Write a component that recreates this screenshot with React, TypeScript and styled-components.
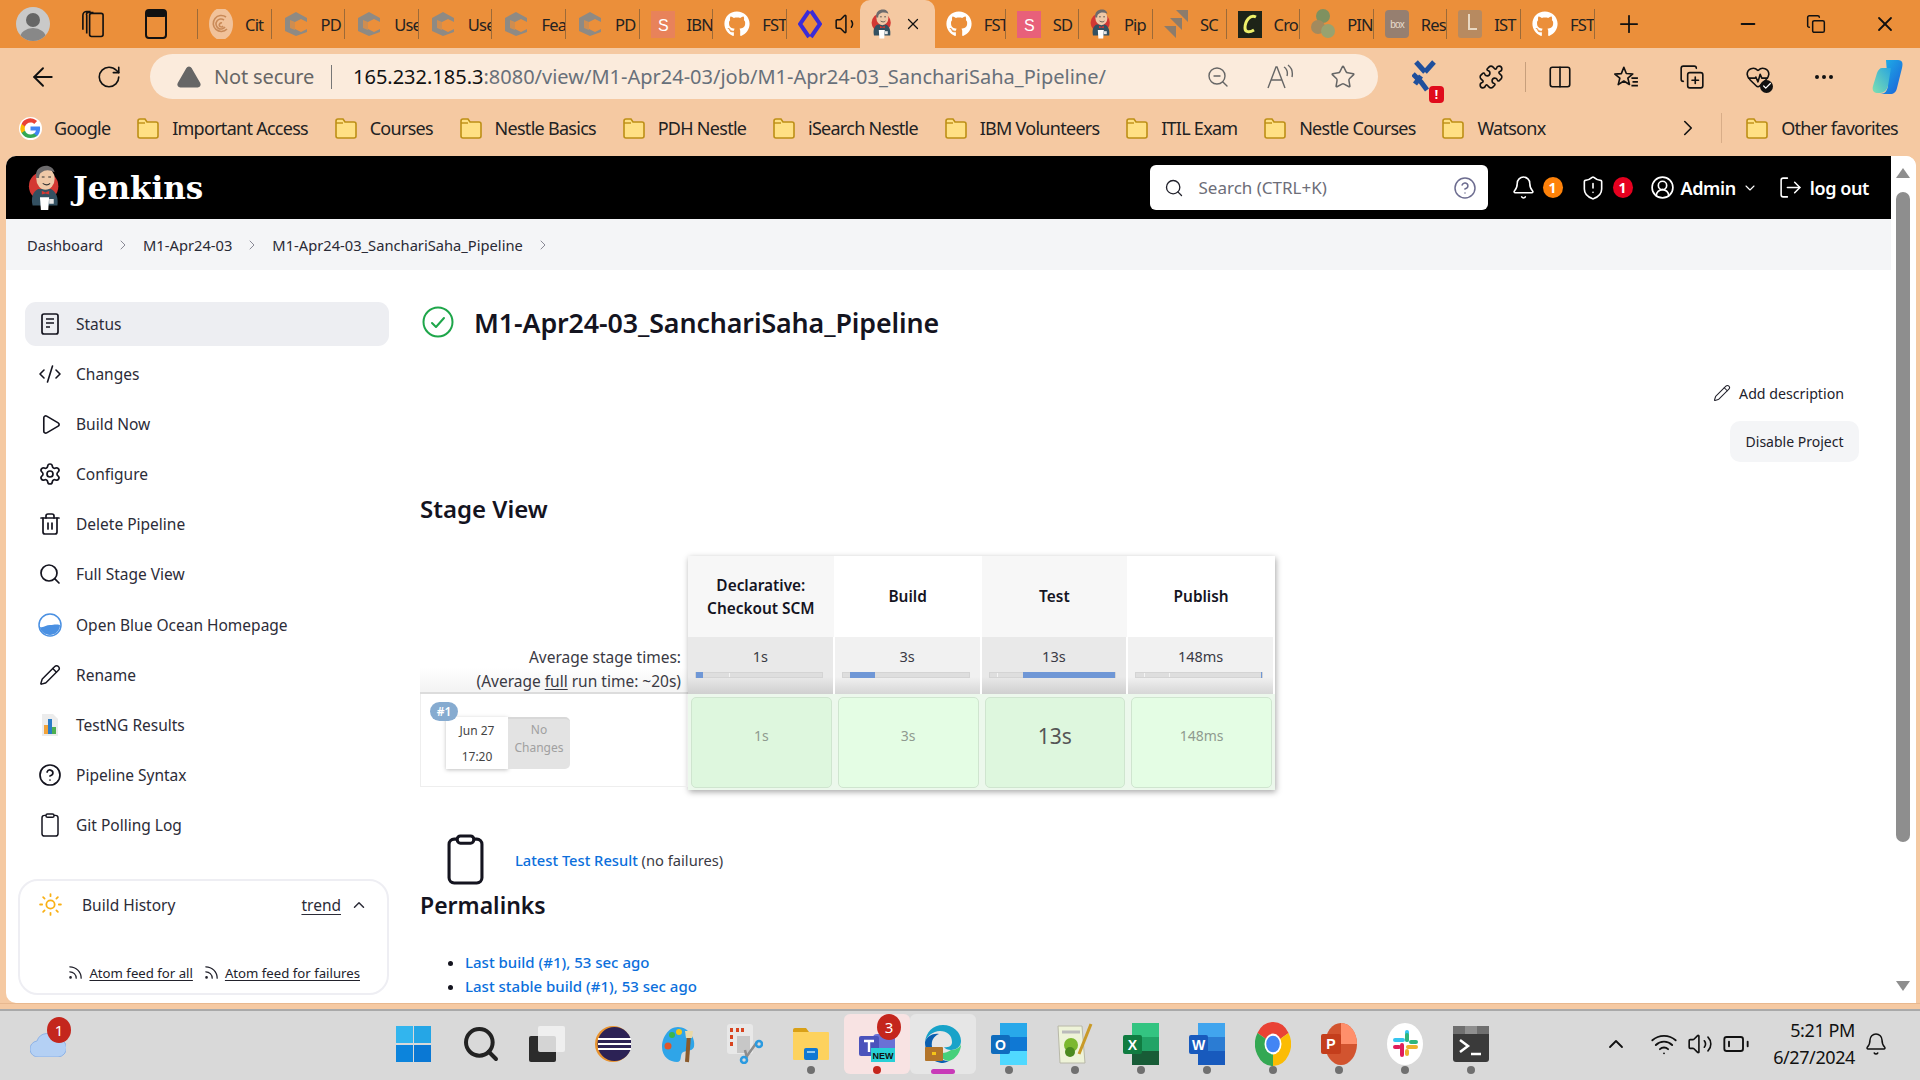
import React from "react";
import styled, { createGlobalStyle } from "styled-components";
import {
  ArrowLeft, RotateCw, TriangleAlert, ZoomOut, Star, Puzzle, Columns2, CopyPlus, HeartPulse, Ellipsis,
  Plus, Minus, X, Copy, Volume1, Volume2, Bell, ShieldAlert, CircleUserRound, ChevronDown, ChevronUp, ChevronRight,
  LogOut, Search, CircleHelp, Pencil, CodeXml, Play, Settings, Trash2, Sun, Rss, Wifi, BatteryLow, Check,
} from "lucide-react";
import { FaGithub } from "react-icons/fa";

const GlobalStyle = createGlobalStyle`
  html, body { margin: 0; padding: 0; width: 1920px; height: 1080px; overflow: hidden; }
  body { font-family: "Noto Sans", "Liberation Sans", sans-serif; color: #14141f; }
  * { box-sizing: border-box; }
`;

const Screen = styled.div`
  width: 1920px;
  height: 1080px;
  display: flex;
  flex-direction: column;
  background: #f5c9a2;
`;

/* browser chrome */
const TabBar = styled.div`
  height: 48px;
  background: #eb8f3a;
  display: flex;
  align-items: center;
  padding-left: 16px;
  flex: none;
`;
const Avatar = styled.div`
  width: 34px;
  height: 34px;
  border-radius: 50%;
  background: #c9c9c9;
  margin-right: 30px;
  overflow: hidden;
  flex: none;
`;
const TabTool = styled.div<{ $w: number; $mr: number }>`
  width: ${(p) => p.$w}px;
  margin-right: ${(p) => p.$mr}px;
  display: flex;
  justify-content: center;
  flex: none;
`;
const TabStrip = styled.div`
  display: flex;
  align-items: center;
  border-left: 1px solid #9c6a38;
  height: 30px;
`;
const Tab = styled.div<{ $w?: number; $plain?: boolean }>`
  width: ${(p) => p.$w || 73.6}px;
  height: 30px;
  flex: none;
  display: flex;
  align-items: center;
  gap: 12px;
  padding-left: 11px;
  overflow: hidden;
  border-right: ${(p) => (p.$plain ? "none" : "1px solid #9c6a38")};
  font-size: 16.5px;
  letter-spacing: -0.8px;
  color: #222;
  white-space: nowrap;
  svg { flex: none; }
`;
const ActiveTab = styled.div`
  width: 75px;
  height: 48px;
  flex: none;
  background: #f5c9a2;
  border-radius: 10px 10px 0 0;
  display: flex;
  align-items: center;
  padding-left: 11px;
  gap: 12px;
  svg { flex: none; }
`;
const NewTab = styled.div`
  margin-left: 20px;
  display: flex;
`;
const WindowControls = styled.div`
  margin-left: auto;
  display: flex;
  align-items: center;
  gap: 47px;
  padding-right: 23px;
`;

const Toolbar = styled.div`
  height: 62px;
  display: flex;
  align-items: center;
  padding: 0 0 5px 28px;
  flex: none;
`;
const NavButton = styled.div<{ $mr: number }>`
  display: flex;
  margin-right: ${(p) => p.$mr}px;
`;
const AddressPill = styled.div`
  width: 1228px;
  height: 45px;
  background: #fbebdc;
  border-radius: 23px;
  display: flex;
  align-items: center;
  padding: 0 22px 0 26px;
  margin-right: 14px;
  flex: none;
`;
const NotSecure = styled.span`
  font-size: 20px;
  letter-spacing: -0.15px;
  color: #666;
  margin-left: 12px;
  width: 117px;
  white-space: nowrap;
`;
const PillDivider = styled.div`
  width: 1px;
  height: 24px;
  background: #777;
  margin-right: 21px;
`;
const Url = styled.span`
  font-size: 20px;
  color: #68707a;
  white-space: nowrap;
  b { font-weight: 400; color: #111; }
`;
const PillIcons = styled.div`
  margin-left: auto;
  display: flex;
  align-items: center;
  gap: 36px;
`;
const ToolSlot = styled.div`
  width: 66px;
  display: flex;
  justify-content: center;
  position: relative;
  flex: none;
`;
const ToolSep = styled.div`
  width: 1px;
  height: 30px;
  background: #c79f7c;
  margin: 0 1px;
  flex: none;
`;
const ExtBadge = styled.span`
  position: absolute;
  right: 14px;
  bottom: -9px;
  width: 15px;
  height: 17px;
  border-radius: 4px;
  background: #e00b1c;
  color: #fff;
  font-size: 12px;
  font-weight: 700;
  text-align: center;
  line-height: 17px;
`;
const HeartBadge = styled.span`
  position: absolute;
  right: 18px;
  bottom: -3px;
  width: 13px;
  height: 13px;
  border-radius: 50%;
  background: #111;
  color: #fff;
  display: flex;
  align-items: center;
  justify-content: center;
`;

const BookmarkBar = styled.div`
  height: 46px;
  display: flex;
  align-items: center;
  padding: 0 0 10px 19px;
  gap: 25.7px;
  flex: none;
`;
const Bookmark = styled.div`
  display: flex;
  align-items: center;
  gap: 12px;
  font-size: 18px;
  letter-spacing: -0.72px;
  color: #222;
  white-space: nowrap;
`;
const BookmarkEnd = styled.div`
  margin-left: auto;
  display: flex;
  align-items: center;
  padding-right: 22px;
`;
const BookmarkDivider = styled.div`
  width: 1px;
  height: 30px;
  background: #d8ad88;
  margin: 0 23px 0 20px;
`;

/* jenkins page */
const Page = styled.div`
  height: 847px;
  margin: 0 4px 0 6px;
  background: #fff;
  border-radius: 10px 10px 0 10px;
  display: flex;
  overflow: hidden;
  flex: none;
`;
const PageBody = styled.div`
  width: 1885px;
  display: flex;
  flex-direction: column;
  flex: none;
`;
const Header = styled.header`
  height: 63px;
  background: #000;
  display: flex;
  align-items: center;
  color: #fff;
  padding: 0 22px;
  flex: none;
`;
const Brand = styled.div`
  font-family: "DejaVu Serif", "Liberation Serif", serif;
  font-weight: 700;
  font-size: 31px;
  margin-left: 12px;
`;
const SearchBox = styled.div`
  margin-left: auto;
  width: 338px;
  height: 45px;
  background: #fff;
  border-radius: 6px;
  display: flex;
  align-items: center;
  padding: 0 11px 0 14px;
  color: #6d6d78;
  font-size: 17px;
  gap: 15px;
  svg:last-child { margin-left: auto; }
`;
const HeaderGroup = styled.div<{ $ml: number; $gap?: number }>`
  display: flex;
  align-items: center;
  margin-left: ${(p) => p.$ml}px;
  gap: ${(p) => p.$gap ?? 7}px;
`;
const Count = styled.span<{ $c: string }>`
  width: 20px;
  height: 21px;
  border-radius: 50%;
  background: ${(p) => p.$c};
  color: #fff;
  font-size: 14px;
  font-weight: 700;
  display: flex;
  align-items: center;
  justify-content: center;
`;
const HeaderLabel = styled.span`
  font-size: 18px;
  font-weight: 600;
  letter-spacing: -0.4px;
  color: #fff;
`;

const Breadcrumbs = styled.nav`
  height: 51px;
  background: #f4f5f7;
  display: flex;
  align-items: center;
  padding-left: 21px;
  gap: 12px;
  font-size: 14.7px;
  color: #2a2a35;
  flex: none;
  svg { color: #8a8a96; }
`;
const Content = styled.div`
  flex: 1;
  min-height: 0;
  display: grid;
  grid-template-columns: 414px 1fr;
`;
const Sidebar = styled.aside`
  padding: 32px 0 0 12px;
`;
const SideNav = styled.nav`
  margin-left: 7px;
  width: 364px;
  display: flex;
  flex-direction: column;
  gap: 6.1px;
`;
const SideItem = styled.a<{ $active?: boolean }>`
  height: 44px;
  display: flex;
  align-items: center;
  gap: 14px;
  padding-left: 13px;
  border-radius: 11px;
  background: ${(p) => (p.$active ? "#edeef2" : "transparent")};
  font-size: 15.5px;
  color: #2c2c38;
`;
const SideIcon = styled.span`
  width: 24px;
  height: 24px;
  display: flex;
  align-items: center;
  justify-content: center;
  color: #14141f;
  flex: none;
`;
const HistoryCard = styled.section`
  margin-top: 32px;
  width: 371px;
  height: 116px;
  border: 2px solid #eeeef3;
  border-radius: 20px;
  padding-left: 18px;
  display: flex;
  flex-direction: column;
`;
const HistoryHead = styled.div`
  display: flex;
  align-items: center;
  height: 48px;
  font-size: 15.5px;
  color: #2c2c38;
`;
const HistoryTitle = styled.span`
  margin-left: 19px;
`;
const TrendLink = styled.a`
  margin-left: auto;
  text-decoration: underline;
  text-underline-offset: 3px;
`;
const HistoryToggle = styled.span`
  display: flex;
  margin: 0 19px 0 9px;
`;
const FeedRow = styled.div`
  margin-top: 35px;
  display: flex;
  justify-content: flex-end;
  align-items: center;
  gap: 10px;
  padding-right: 27px;
  font-size: 13.2px;
  color: #22222c;
`;
const FeedLink = styled.a`
  display: flex;
  align-items: flex-start;
  gap: 5px;
  line-height: 18px;
  span { text-decoration: underline; text-underline-offset: 2px; }
`;

const Main = styled.main`
  padding: 32px 32px 0 0;
  min-width: 0;
`;
const TitleRow = styled.div`
  display: flex;
  align-items: center;
  height: 40px;
  gap: 20px;
  margin-left: 2px;
`;
const PipelineTitle = styled.h1`
  margin: 0;
  font-size: 26.8px;
  font-weight: 600;
  letter-spacing: -0.1px;
  white-space: nowrap;
`;
const Actions = styled.div`
  margin-top: 34px;
  display: flex;
  flex-direction: column;
  align-items: flex-end;
  gap: 11px;
`;
const AddDescription = styled.a`
  height: 34px;
  display: flex;
  align-items: center;
  gap: 8px;
  padding-right: 15px;
  font-size: 14.2px;
  color: #22222c;
`;
const DisableButton = styled.button`
  width: 129px;
  height: 41px;
  border: none;
  border-radius: 10px;
  background: #f4f5f7;
  font-family: inherit;
  font-size: 14px;
  color: #22222c;
`;
const SectionTitle = styled.h2<{ $mt: number; $size: number }>`
  margin: ${(p) => p.$mt}px 0 0;
  font-size: ${(p) => p.$size}px;
  line-height: 32px;
  font-weight: 600;
`;
const StageView = styled.div`
  margin-top: 31px;
  display: flex;
  align-items: flex-start;
`;
const StageLabels = styled.div`
  width: 268px;
  flex: none;
  padding-top: 81px;
`;
const AverageNote = styled.div`
  height: 57px;
  padding: 8px 7px 0 0;
  text-align: right;
  font-size: 15.5px;
  line-height: 24px;
  color: #3a3a44;
  white-space: nowrap;
  background: linear-gradient(#fff 55%, #f4f4f4 95%);
  border-bottom: 2px solid #dcdcdc;
  u { text-underline-offset: 2px; }
`;
const BuildRow = styled.div`
  height: 93px;
  border: 1px solid #eeeeee;
  border-top: none;
  position: relative;
  padding: 23px 0 0 25px;
  display: flex;
  align-items: flex-start;
`;
const BuildBadge = styled.span`
  position: absolute;
  left: 9px;
  top: 8px;
  width: 28px;
  height: 19px;
  border-radius: 10px;
  background: #86abd0;
  color: #fff;
  font-size: 12px;
  font-weight: 600;
  line-height: 19px;
  text-align: center;
`;
const BuildDate = styled.div`
  width: 62px;
  height: 52px;
  background: #fff;
  box-shadow: 0 1px 4px rgba(0, 0, 0, 0.25);
  font-size: 12px;
  line-height: 26px;
  padding-top: 1px;
  color: #444;
  text-align: center;
`;
const NoChanges = styled.div`
  width: 62px;
  height: 52px;
  background: #e3e3e3;
  border-radius: 0 5px 5px 0;
  border-top: 2px solid #d8d8d8;
  font-size: 12px;
  line-height: 18px;
  color: #a0a0a0;
  text-align: center;
  padding-top: 2px;
`;
const StageTable = styled.div`
  width: 587px;
  display: grid;
  grid-template-columns: repeat(4, 1fr);
  grid-template-rows: 81px 57px 96px;
  box-shadow: 1px 2px 6px rgba(0, 0, 0, 0.35);
  flex: none;
  background: #e9f7e9;
`;
const StageHead = styled.div<{ $odd: boolean }>`
  background: ${(p) => (p.$odd ? "#f7f7f7" : "#fff")};
  border-right: 1px solid #fff;
  display: flex;
  align-items: center;
  justify-content: center;
  text-align: center;
  font-size: 15.4px;
  font-weight: 600;
  line-height: 23px;
  padding: 0 10px;
`;
const StageAvg = styled.div<{ $odd: boolean }>`
  background: linear-gradient(
    ${(p) => (p.$odd ? "#e9e9e9 70%, #cfcfcf" : "#f1f1f1 70%, #d6d6d6")}
  );
  border-right: 2px solid #fff;
  text-align: center;
  font-size: 14.5px;
  line-height: 20px;
  color: #3a3a44;
  padding: 9px 6px 0;
`;
const BarTrack = styled.div`
  position: relative;
  height: 6px;
  margin: 6px 4px 0 1px;
  background: #dedede;
  border: 1px solid #d4d4d4;
`;
const BarFill = styled.span`
  position: absolute;
  top: -1px;
  bottom: -1px;
  background: #6f97d6;
`;
const BarTick = styled.span`
  position: absolute;
  top: 0;
  bottom: 0;
  width: 1px;
  background: #f4f4f4;
`;
const StageCell = styled.div`
  padding: 3px 3px 2px;
  display: flex;
  background: #ecf8ec;
`;
const StageCard = styled.div<{ $odd: boolean; $big?: boolean }>`
  flex: 1;
  background: ${(p) => (p.$odd ? "#def7de" : "#e4fde4")};
  border: 1px solid #cfe5cf;
  border-radius: 5px;
  padding-bottom: 14px;
  display: flex;
  align-items: center;
  justify-content: center;
  font-size: ${(p) => (p.$big ? 21 : 14)}px;
  color: ${(p) => (p.$big ? "#555" : "#8f9a8f")};
`;
const TestResult = styled.div`
  margin: 44px 0 0 27px;
  display: flex;
  align-items: center;
  gap: 31px;
  height: 51px;
  font-size: 14.7px;
  color: #3a3a44;
`;
const BlueLink = styled.a`
  color: #0b6fdc;
  font-weight: 500;
`;
const Permalinks = styled.ul`
  margin: 29px 0 0;
  padding: 0 0 0 45px;
  font-size: 15px;
  line-height: 24px;
`;

const Scrollbar = styled.div`
  width: 25px;
  flex: none;
  position: relative;
  background: #fff;
`;
const ScrollArrow = styled.span<{ $up?: boolean }>`
  position: absolute;
  left: 5px;
  ${(p) => (p.$up ? "top: 12px;" : "bottom: 12px;")}
  width: 0;
  height: 0;
  border-left: 7px solid transparent;
  border-right: 7px solid transparent;
  ${(p) => (p.$up ? "border-bottom: 10px solid #8e8e8e;" : "border-top: 10px solid #8e8e8e;")}
`;
const ScrollThumb = styled.div`
  position: absolute;
  left: 5px;
  top: 36px;
  width: 14px;
  height: 650px;
  background: #8e8e8e;
  border-radius: 7px;
`;

/* taskbar */
const Gutter = styled.div`
  height: 6px;
  flex: none;
  border-top: 1px solid #e8b88f;
`;
const Taskbar = styled.div`
  height: 71px;
  flex: none;
  background: #d9d9d9;
  border-top: 2px solid #a9a9a9;
  padding-bottom: 3px;
  display: flex;
  align-items: center;
`;
const WeatherSlot = styled.div`
  width: 382px;
  padding-left: 30px;
  flex: none;
  display: flex;
  position: relative;
`;
const RedCount = styled.span<{ $l: number; $t: number }>`
  position: absolute;
  left: ${(p) => p.$l}px;
  top: ${(p) => p.$t}px;
  width: 24px;
  height: 26px;
  border-radius: 50%;
  background: #c4261d;
  color: #fff;
  font-size: 15px;
  line-height: 26px;
  text-align: center;
`;
const TaskItem = styled.div<{ $bg?: string }>`
  width: 66px;
  height: 60px;
  flex: none;
  display: flex;
  align-items: center;
  justify-content: center;
  position: relative;
  border-radius: 6px;
  background: ${(p) => p.$bg || "transparent"};
`;
const StartNudge = styled.span`
  display: flex;
  margin-right: 4px;
`;
const TaskDot = styled.span<{ $c?: string; $wide?: boolean }>`
  position: absolute;
  bottom: 0;
  left: 50%;
  transform: translateX(-50%);
  width: ${(p) => (p.$wide ? 24 : 8)}px;
  height: ${(p) => (p.$wide ? 5 : 8)}px;
  border-radius: 4px;
  background: ${(p) => p.$c || "#707070"};
`;
const Tray = styled.div`
  margin-left: auto;
  display: flex;
  align-items: center;
  padding-right: 32px;
`;
const TrayIcons = styled.div`
  display: flex;
  align-items: center;
  gap: 9px;
  margin-right: 23px;
  svg:first-child { margin-right: 13px; }
`;
const Clock = styled.div`
  text-align: right;
  font-size: 18px;
  letter-spacing: -0.4px;
  line-height: 27px;
  color: #111;
  margin-right: 9px;
`;

/* drawings */
const JenkinsLogo = ({ h }: { h: number }) => (
  <svg width={h * 0.72} height={h} viewBox="0 0 36 50">
    <circle cx="17" cy="23" r="16" fill="#d33833" />
    <path d="M5 44c-2-8 0-15 6-18l14 0c6 3 8 10 7 18z" fill="#335061" />
    <ellipse cx="19" cy="15" rx="10" ry="12" fill="#efc9a8" />
    <path d="M9 14C7 4 15 0 22 1c4 1 6 3 7 7-5-3-11-3-14 0-2 1-3 3-3 6z" fill="#6d6b6d" />
    <path d="M15 13h3M22 13h3M16 20c3 2 6 2 8 0" stroke="#333" strokeWidth="1.2" fill="none" />
    <path d="M15 28l4 2 4-2v4l-4-1-4 1z" fill="#d33833" />
    <path d="M13 35h10l-1 14h-8z" fill="#fff" />
    <path d="M23 37h5v5h-5z" fill="#e5e5e5" />
  </svg>
);

const WorkspaceIcon = () => (
  <svg width="26" height="30" viewBox="0 0 26 30" fill="none" stroke="#111" strokeWidth="1.7">
    <rect x="10" y="4" width="14" height="24" rx="2" />
    <path d="M7 25V6a2 2 0 0 1 2-3h5M3 21V6a4 4 0 0 1 4-4h4" />
  </svg>
);
const VerticalTabsIcon = () => (
  <svg width="22" height="30" viewBox="0 0 22 30" fill="none">
    <rect x="1" y="1" width="20" height="28" rx="3" stroke="#111" strokeWidth="2" />
    <rect x="1" y="1" width="20" height="7" rx="2" fill="#111" />
  </svg>
);
const EdgeGhost = () => (
  <svg width="26" height="26" viewBox="0 0 26 26">
    <path d="M13 1l11 6v4l-6-3-6 3v7l6 3 6-3v3l-11 4-11-5V7z" fill="#8e8a84" />
    <path d="M7 9l5 2v8l-5-2z" fill="#eb8f3a" opacity=".7" />
  </svg>
);
const SwirlIcon = () => (
  <svg width="24" height="32" viewBox="0 0 24 32">
    <ellipse cx="12" cy="16" rx="12" ry="16" fill="#f1c29a" />
    <path d="M17 9a8 8 0 1 0 1 12M15 12a5 5 0 1 0 1 7M13 15a2 2 0 1 0 1 3" fill="none" stroke="#c98a58" strokeWidth="1.6" />
  </svg>
);
const LetterTile = ({ c, t }: { c: string; t: string }) => (
  <svg width="24" height="27" viewBox="0 0 24 27">
    <rect width="24" height="27" fill={c} />
    <text x="12" y="20" textAnchor="middle" fontSize="16" fontFamily="Liberation Sans" fill="#fff">{t}</text>
  </svg>
);
const DiamondCode = () => (
  <svg width="24" height="30" viewBox="0 0 24 30">
    <path d="M11 2L2 15l9 13M13 2l9 13-9 13" fill="none" stroke="#3b2bd8" strokeWidth="4" />
  </svg>
);
const JiraStack = () => (
  <svg width="24" height="28" viewBox="0 0 24 28">
    <path d="M12 0h12v12zM6 8h12v12zM0 16h12v12z" fill="#8c7c6c" />
  </svg>
);
const CroIcon = () => (
  <svg width="24" height="27" viewBox="0 0 24 27">
    <rect width="24" height="27" fill="#1e2418" />
    <path d="M18 6c-6-3-11 4-11 11 0 4 4 5 9 2" fill="none" stroke="#eef06a" strokeWidth="3" />
  </svg>
);
const PinIcon = () => (
  <svg width="24" height="30" viewBox="0 0 24 30">
    <circle cx="12" cy="7" r="7" fill="#7f9160" />
    <circle cx="7" cy="18" r="7" fill="#a38a5e" />
    <circle cx="17" cy="22" r="7" fill="#98a270" />
  </svg>
);
const BoxIcon = () => (
  <svg width="24" height="28" viewBox="0 0 24 28">
    <rect width="24" height="28" rx="4" fill="#967f70" />
    <text x="12" y="18" textAnchor="middle" fontSize="10" fontFamily="Liberation Sans" fill="#e8dccb">box</text>
  </svg>
);
const ClockTile = () => (
  <svg width="24" height="28" viewBox="0 0 24 28">
    <rect width="24" height="28" rx="3" fill="#b78a60" />
    <path d="M11 4v15h8" stroke="#e9d8c2" strokeWidth="2" fill="none" />
  </svg>
);
const ReadAloud = () => (
  <svg width="28" height="26" viewBox="0 0 28 26" fill="none" stroke="#666" strokeWidth="1.4">
    <path d="M2 24L10 3h1l8 21M5 16h11" />
    <path d="M18 3c3 2 4 5 3 9M22 1c4 3 5 7 4 12" />
  </svg>
);
const BookmarkFolder = () => (
  <svg width="24" height="24" viewBox="0 0 24 24">
    <path d="M2 5a2 2 0 0 1 2-2h5l2 3h9a2 2 0 0 1 2 2v12a2 2 0 0 1-2 2H4a2 2 0 0 1-2-2z" fill="#ffe084" stroke="#bd8f16" strokeWidth="1.6" />
    <path d="M2 7h7" stroke="#bd8f16" strokeWidth="1.4" />
  </svg>
);
const GoogleG = () => (
  <svg width="23" height="23" viewBox="0 0 48 48">
    <circle cx="24" cy="24" r="24" fill="#fff" />
    <path d="M44 24c0-1.400-.1-2.800-.4-4H24v8h11.300c-.5 2.700-2 5-4.300 6.500v5.400h6.900C42 36 44 30.500 44 24z" fill="#4285f4" />
    <path d="M24 44c5.400 0 10-1.800 13.900-4.100L31 34.500c-1.900 1.300-4.300 2-7 2-5.400 0-9.900-3.600-11.500-8.500H5.400v5.500C8.700 40 15.800 44 24 44z" fill="#34a853" />
    <path d="M12.500 28c-.8-2.600-.8-5.400 0-8v-5.500H5.400a20 20 0 0 0 0 19z" fill="#fbbc05" />
    <path d="M24 11.500c3 0 5.700 1 7.800 3l5.900-5.900A20 20 0 0 0 5.400 14.500l7.100 5.500c1.600-4.900 6.100-8.500 11.500-8.500z" fill="#ea4335" />
  </svg>
);
const FavList = () => (
  <svg width="26" height="26" viewBox="0 0 24 24" fill="none" stroke="#111" strokeWidth="1.5" strokeLinejoin="round">
    <path d="M10 3l2.300 5.800 6 .4-4.600 3.800 1.500 5.900L10 15.700 4.800 19l1.500-5.900L1.700 9.300l6-.4z" />
    <path d="M17 13h6M18 16.500h5M17 20h6" />
  </svg>
);
const ExtensionMark = () => (
  <svg width="26" height="34" viewBox="0 0 26 34">
    <path d="M4 2l9 10M22 2l-9 10M1 14l8 8 6 8M9 16l-6 8" stroke="#1f4f9c" strokeWidth="5" fill="none" />
  </svg>
);
const CopilotMark = () => (
  <svg width="36" height="36" viewBox="0 0 36 36">
    <defs>
      <linearGradient id="cp1" x1="0" y1="0" x2="1" y2="1"><stop offset="0" stopColor="#1fb6e8" /><stop offset="1" stopColor="#1a5ed8" /></linearGradient>
      <linearGradient id="cp2" x1="0" y1="1" x2="1" y2="0"><stop offset="0" stopColor="#7ee0b0" /><stop offset="1" stopColor="#28a5e0" /></linearGradient>
    </defs>
    <path d="M14 1h12c5 0 5 4 4 8l-5 20c-1 4-3 6-7 6H8c6 0 7-4 8-8z" fill="url(#cp1)" />
    <path d="M10 9h9l-3 18c-1 4-4 7-8 7H5C1 34 0 30 1 27l4-13c1-3 3-5 5-5z" fill="url(#cp2)" />
  </svg>
);
const StatusIcon = () => (
  <svg width="20" height="24" viewBox="0 0 20 24" fill="none" stroke="#14141f" strokeWidth="1.7">
    <rect x="2" y="2" width="16" height="20" rx="2" />
    <path d="M6 7h8M6 11h8M6 15h4" />
  </svg>
);
const ClipboardGlyph = ({ w, h, sw }: { w: number; h: number; sw: number }) => (
  <svg width={w} height={h} viewBox="0 0 36 50" fill="none" stroke="#14141f" strokeWidth={sw} preserveAspectRatio="none">
    <rect x="2" y="5" width="32" height="43" rx="5" />
    <rect x="10" y="2" width="16" height="7" rx="3" fill="#fff" />
  </svg>
);
const BlueOcean = () => (
  <svg width="24" height="24" viewBox="0 0 24 24">
    <circle cx="12" cy="12" r="11" fill="#fff" stroke="#4a90e2" strokeWidth="1.5" />
    <path d="M2 14c4 1 6-2 10-2s5-1 10 0c0 6-5 10-10 10S2 18 2 14z" fill="#4a90e2" />
  </svg>
);
const TestNgIcon = () => (
  <svg width="18" height="22" viewBox="0 0 18 22">
    <path d="M1 0h11l5 5v17H1z" fill="#ececec" />
    <rect x="3" y="11" width="4" height="9" fill="#f2a33a" />
    <rect x="7" y="5" width="4" height="15" fill="#2a7cc7" />
    <rect x="11" y="13" width="4" height="7" fill="#4caf50" />
  </svg>
);
const SuccessIcon = () => (
  <svg width="32" height="32" viewBox="0 0 32 32" fill="none">
    <circle cx="16" cy="16" r="14.500" stroke="#1ea64a" strokeWidth="2" />
    <path d="M10 17l4 4 8-9" stroke="#1ea64a" strokeWidth="2" strokeLinecap="round" strokeLinejoin="round" />
  </svg>
);

const CloudIcon = () => (
  <svg width="36" height="26" viewBox="0 0 36 26">
    <path d="M9 26a8 8 0 0 1-2-16 11 11 0 0 1 20-2 9 9 0 0 1 1 18z" fill="#b4d0f4" stroke="#8fb3e6" />
  </svg>
);
const StartIcon = () => (
  <svg width="35" height="36" viewBox="0 0 35 36">
    <rect width="17" height="17" fill="#32b5ee" />
    <rect x="18" width="17" height="17" fill="#25a6e6" />
    <rect y="19" width="17" height="17" fill="#0c84dc" />
    <rect x="18" y="19" width="17" height="17" fill="#0a78d4" />
  </svg>
);
const TaskView = () => (
  <svg width="36" height="36" viewBox="0 0 36 36">
    <rect y="10" width="27" height="26" rx="2" fill="#2b2b2b" />
    <rect x="9" width="27" height="26" rx="2" fill="#f2f2f2" fillOpacity=".85" />
  </svg>
);
const EclipseIcon = () => (
  <svg width="36" height="36" viewBox="0 0 36 36">
    <circle cx="18" cy="18" r="18" fill="#e8932e" />
    <circle cx="19.500" cy="18" r="17" fill="#2c2255" />
    <path d="M3 13h33M3 18h33M3 23h33" stroke="#fff" strokeWidth="2.200" />
  </svg>
);
const PaletteIcon = () => (
  <svg width="34" height="38" viewBox="0 0 34 38">
    <path d="M16 2C6 2 0 13 0 22c0 10 8 15 15 15 5 0 3-6 5-9 3-3 10-1 12-6 2-9-6-20-16-20z" fill="#2fa5e8" />
    <circle cx="10" cy="10" r="3" fill="#3cb64a" />
    <circle cx="17" cy="7" r="3" fill="#f5c518" />
    <circle cx="6" cy="21" r="3.500" fill="#e0562a" />
    <path d="M27 10l-2 27" stroke="#8a5a2b" strokeWidth="4" />
    <path d="M23 6h8l-1 7h-6z" fill="#e9d9a8" />
  </svg>
);
const SnipIcon = () => (
  <svg width="36" height="40" viewBox="0 0 36 40">
    <rect width="26" height="30" rx="3" fill="#e8e8e8" />
    <path d="M3 4h3v4H3zM9 4h3v4H9zM14 4h3v4h-3zM3 11h3v4H3zM3 18h3v4H3z" fill="#d8431f" />
    <rect x="10" y="12" width="13" height="17" fill="#c7c7c7" />
    <path d="M18 26l2 8M30 18l-10 14" stroke="#8d8d8d" strokeWidth="2.500" />
    <circle cx="17" cy="36" r="3" fill="none" stroke="#2a9ae0" strokeWidth="2.500" />
    <circle cx="32" cy="20" r="3" fill="none" stroke="#2a9ae0" strokeWidth="2.500" />
  </svg>
);
const FolderIcon = () => (
  <svg width="36" height="32" viewBox="0 0 36 32">
    <path d="M0 2a2 2 0 0 1 2-2h11l3 4H0z" fill="#d9a016" />
    <rect y="4" width="36" height="28" rx="1" fill="#fdd25e" />
    <rect x="11" y="20" width="14" height="12" rx="2" fill="#0f78d4" />
    <rect x="14" y="23" width="8" height="2" fill="#8ec8f0" />
  </svg>
);
const TeamsIcon = () => (
  <svg width="36" height="36" viewBox="0 0 36 36">
    <circle cx="26" cy="6" r="5" fill="#7b83eb" />
    <rect x="14" y="8" width="22" height="20" rx="4" fill="#6a71d6" />
    <rect y="10" width="20" height="20" rx="2" fill="#4b53bc" />
    <path d="M5 15h10M10 15v11" stroke="#fff" strokeWidth="2.400" />
    <rect x="12" y="22" width="24" height="14" fill="#27d0d6" />
    <text x="24" y="33" textAnchor="middle" fontSize="9" fontWeight="700" fontFamily="Liberation Sans" fill="#111">NEW</text>
  </svg>
);
const EdgeIcon = () => (
  <svg width="36" height="38" viewBox="0 0 36 38">
    <path d="M18 0c10 0 18 7 18 16 0 6-5 9-10 9-3 0-6-1-7-3 6 1 8-2 8-5C27 10 22 6 15 6 8 6 2 11 0 17 1 7 8 0 18 0z" fill="#18a3c9" />
    <path d="M0 17c2-6 8-9 14-8-5 2-8 6-7 13 1 8 8 14 17 14a18 18 0 0 1-6 2C8 38 0 29 0 17z" fill="#0a5fb0" />
    <path d="M26 25c4 0 9-2 10-6 0 8-5 15-12 17-6-1-12-5-14-12 2 4 9 6 16 1z" fill="#45d07a" />
    <rect y="22" width="18" height="14" rx="1" fill="#b3752a" />
    <rect x="7" y="27" width="4" height="3" fill="#f5c518" />
  </svg>
);
const OfficeTile = ({ back, front, letter }: { back: string[]; front: string; letter: string }) => (
  <svg width="36" height="42" viewBox="0 0 36 42">
    <rect x="9" width="27" height="14" fill={back[0]} />
    <rect x="9" y="14" width="27" height="14" fill={back[1]} />
    <rect x="9" y="28" width="27" height="14" fill={back[2]} />
    <rect y="12" width="19" height="19" rx="2" fill={front} />
    <text x="9.500" y="27" textAnchor="middle" fontSize="14" fontWeight="700" fontFamily="Liberation Sans" fill="#fff">{letter}</text>
  </svg>
);
const NotepadIcon = () => (
  <svg width="36" height="42" viewBox="0 0 36 42">
    <path d="M1 3h24l3 37H3z" fill="#eef3d8" stroke="#b8b8a8" />
    <path d="M5 9h18" stroke="#bbb" strokeWidth="3" />
    <circle cx="14" cy="22" r="7" fill="#7cb82f" />
    <circle cx="13" cy="29" r="5" fill="#4c8a20" />
    <path d="M34 1l-12 30" stroke="#c99a28" strokeWidth="3" />
  </svg>
);
const ChromeIcon = () => (
  <svg width="36" height="44" viewBox="0 0 36 36" preserveAspectRatio="none">
    <path d="M18 18L2.410 9A18 18 0 0 1 33.590 9z" fill="#e94235" />
    <path d="M18 18L33.590 9A18 18 0 0 1 18 36z" fill="#fbbc04" />
    <path d="M18 18L18 36A18 18 0 0 1 2.410 9z" fill="#34a853" />
    <circle cx="18" cy="18" r="8.500" fill="#fff" />
    <circle cx="18" cy="18" r="6.800" fill="#4285f4" />
  </svg>
);
const PowerPointIcon = () => (
  <svg width="36" height="42" viewBox="0 0 36 42">
    <ellipse cx="20" cy="21" rx="16" ry="21" fill="#d2542f" />
    <path d="M20 0c9 0 16 9 16 21H20z" fill="#ff8f6b" />
    <rect y="11" width="20" height="20" rx="2" fill="#c43e1c" />
    <text x="10" y="26" textAnchor="middle" fontSize="14" fontWeight="700" fontFamily="Liberation Sans" fill="#fff">P</text>
  </svg>
);
const SlackIcon = () => (
  <svg width="36" height="42" viewBox="0 0 36 42">
    <ellipse cx="18" cy="21" rx="18" ry="21" fill="#fff" />
    <path d="M8 17h8M20 9v8" stroke="#36c5f0" strokeWidth="4" strokeLinecap="round" />
    <path d="M20 12v5M24 19h5" stroke="#2eb67d" strokeWidth="4" strokeLinecap="round" />
    <path d="M21 24h8M20 28v3" stroke="#ecb22e" strokeWidth="4" strokeLinecap="round" />
    <path d="M15 22v10M8 24h4" stroke="#e01e5a" strokeWidth="4" strokeLinecap="round" />
  </svg>
);
const TerminalIcon = () => (
  <svg width="36" height="36" viewBox="0 0 36 36">
    <rect width="36" height="36" rx="3" fill="#3a3a3a" />
    <rect width="36" height="8" fill="#6f6f6f" />
    <rect x="12" width="12" height="8" fill="#8f8f8f" />
    <path d="M7 14l8 6-8 6" stroke="#fff" strokeWidth="2.500" fill="none" />
    <path d="M18 28h10" stroke="#fff" strokeWidth="2.500" />
  </svg>
);

const leftTabs = [
  { icon: <SwirlIcon />, label: "Cit" },
  { icon: <EdgeGhost />, label: "PD" },
  { icon: <EdgeGhost />, label: "Use" },
  { icon: <EdgeGhost />, label: "Use" },
  { icon: <EdgeGhost />, label: "Fea" },
  { icon: <EdgeGhost />, label: "PD" },
  { icon: <LetterTile c="#e8825a" t="S" />, label: "IBN" },
  { icon: <FaGithub size={26} color="#fff" />, label: "FST" },
];
const rightTabs = [
  { icon: <LetterTile c="#e8607a" t="S" />, label: "SD" },
  { icon: <JenkinsLogo h={30} />, label: "Pip" },
  { icon: <JiraStack />, label: "SC" },
  { icon: <CroIcon />, label: "Cro" },
  { icon: <PinIcon />, label: "PIN" },
  { icon: <BoxIcon />, label: "Res" },
  { icon: <ClockTile />, label: "IST" },
  { icon: <FaGithub size={26} color="#fff" />, label: "FST" },
];
const bookmarks = ["Important Access", "Courses", "Nestle Basics", "PDH Nestle", "iSearch Nestle", "IBM Volunteers", "ITIL Exam", "Nestle Courses", "Watsonx"];

const sideItems = [
  { label: "Status", icon: <StatusIcon />, active: true },
  { label: "Changes", icon: <CodeXml size={26} strokeWidth={1.6} /> },
  { label: "Build Now", icon: <Play size={23} strokeWidth={1.7} /> },
  { label: "Configure", icon: <Settings size={24} strokeWidth={1.7} /> },
  { label: "Delete Pipeline", icon: <Trash2 size={24} strokeWidth={1.7} /> },
  { label: "Full Stage View", icon: <Search size={24} strokeWidth={1.7} /> },
  { label: "Open Blue Ocean Homepage", icon: <BlueOcean /> },
  { label: "Rename", icon: <Pencil size={22} strokeWidth={1.6} /> },
  { label: "TestNG Results", icon: <TestNgIcon /> },
  { label: "Pipeline Syntax", icon: <CircleHelp size={24} strokeWidth={1.7} /> },
  { label: "Git Polling Log", icon: <ClipboardGlyph w={18} h={24} sw={3} /> },
];

const stages = [
  { name: <>Declarative:<br />Checkout SCM</>, avg: "1s", fill: [0, 5.5], ticks: [26] },
  { name: "Build", avg: "3s", fill: [6, 20], ticks: [] as number[] },
  { name: "Test", avg: "13s", fill: [26.5, 73.5], ticks: [6], big: true },
  { name: "Publish", avg: "148ms", fill: [99.4, 0.6], ticks: [6, 26] },
];

const taskApps = [
  { icon: <StartNudge><StartIcon /></StartNudge> },
  { icon: <Search size={40} strokeWidth={2.4} color="#222" /> },
  { icon: <TaskView /> },
  { icon: <EclipseIcon /> },
  { icon: <PaletteIcon /> },
  { icon: <SnipIcon /> },
  { icon: <FolderIcon />, dot: true },
  { icon: <TeamsIcon />, dot: true, dotColor: "#c4261d", bg: "#f8e3e3", count: "3" },
  { icon: <EdgeIcon />, bar: true, bg: "#e6e6e6" },
  { icon: <OfficeTile back={["#28a8ea", "#0f78d4", "#50d9ff"]} front="#0f6cbd" letter="O" />, dot: true },
  { icon: <NotepadIcon />, dot: true },
  { icon: <OfficeTile back={["#33c481", "#21a366", "#185c37"]} front="#107c41" letter="X" />, dot: true },
  { icon: <OfficeTile back={["#41a5ee", "#2b7cd3", "#185abd"]} front="#185abd" letter="W" />, dot: true },
  { icon: <ChromeIcon />, dot: true },
  { icon: <PowerPointIcon />, dot: true },
  { icon: <SlackIcon />, dot: true },
  { icon: <TerminalIcon />, dot: true },
];

const App = () => (
  <Screen>
    <GlobalStyle />
    <TabBar>
      <Avatar>
        <svg width="34" height="34" viewBox="0 0 34 34">
          <circle cx="17" cy="13" r="7" fill="#666" />
          <ellipse cx="17" cy="31" rx="13" ry="10" fill="#888" />
        </svg>
      </Avatar>
      <TabTool $w={25} $mr={40}><WorkspaceIcon /></TabTool>
      <TabTool $w={22} $mr={30}><VerticalTabsIcon /></TabTool>
      <TabStrip>
        {leftTabs.map((t, i) => (
          <Tab key={i}>{t.icon}{t.label}</Tab>
        ))}
        <Tab $w={73} $plain>
          <DiamondCode />
          <Volume1 size={26} strokeWidth={1.4} color="#111" />
        </Tab>
        <ActiveTab>
          <JenkinsLogo h={30} />
          <X size={18} strokeWidth={1.6} color="#111" />
        </ActiveTab>
        <Tab $w={71}><FaGithub size={26} color="#fff" />FST</Tab>
        {rightTabs.map((t, i) => (
          <Tab key={i}>{t.icon}{t.label}</Tab>
        ))}
      </TabStrip>
      <NewTab><Plus size={28} strokeWidth={1.5} color="#111" /></NewTab>
      <WindowControls>
        <Minus size={22} strokeWidth={2} color="#111" />
        <Copy size={20} strokeWidth={1.8} color="#111" />
        <X size={24} strokeWidth={1.8} color="#111" />
      </WindowControls>
    </TabBar>

    <Toolbar>
      <NavButton $mr={38}><ArrowLeft size={30} strokeWidth={1.5} color="#111" /></NavButton>
      <NavButton $mr={28}><RotateCw size={26} strokeWidth={1.5} color="#111" /></NavButton>
      <AddressPill>
        <TriangleAlert size={26} fill="#666" color="#666" strokeWidth={1.5} />
        <NotSecure>Not secure</NotSecure>
        <PillDivider />
        <Url><b>165.232.185.3</b>:8080/view/M1-Apr24-03/job/M1-Apr24-03_SanchariSaha_Pipeline/</Url>
        <PillIcons>
          <ZoomOut size={24} strokeWidth={1.4} color="#666" />
          <ReadAloud />
          <Star size={26} strokeWidth={1.4} color="#666" />
        </PillIcons>
      </AddressPill>
      <ToolSlot><ExtensionMark /><ExtBadge>!</ExtBadge></ToolSlot>
      <ToolSlot><Puzzle size={26} strokeWidth={1.5} color="#111" /></ToolSlot>
      <ToolSep />
      <ToolSlot><Columns2 size={26} strokeWidth={1.5} color="#111" /></ToolSlot>
      <ToolSlot><FavList /></ToolSlot>
      <ToolSlot><CopyPlus size={26} strokeWidth={1.5} color="#111" /></ToolSlot>
      <ToolSlot>
        <HeartPulse size={26} strokeWidth={1.5} color="#111" />
        <HeartBadge><Check size={10} strokeWidth={3} /></HeartBadge>
      </ToolSlot>
      <ToolSlot><Ellipsis size={24} strokeWidth={2} color="#111" /></ToolSlot>
      <ToolSlot><CopilotMark /></ToolSlot>
    </Toolbar>

    <BookmarkBar>
      <Bookmark><GoogleG />Google</Bookmark>
      {bookmarks.map((b) => (
        <Bookmark key={b}><BookmarkFolder />{b}</Bookmark>
      ))}
      <BookmarkEnd>
        <ChevronRight size={26} strokeWidth={1.5} color="#111" />
        <BookmarkDivider />
        <Bookmark><BookmarkFolder />Other favorites</Bookmark>
      </BookmarkEnd>
    </BookmarkBar>

    <Page>
      <PageBody>
        <Header>
          <JenkinsLogo h={46} />
          <Brand>Jenkins</Brand>
          <SearchBox>
            <Search size={20} strokeWidth={1.6} color="#22222c" />
            Search (CTRL+K)
            <CircleHelp size={24} strokeWidth={1.5} color="#6d6d90" />
          </SearchBox>
          <HeaderGroup $ml={23}>
            <Bell size={25} strokeWidth={1.5} color="#fff" />
            <Count $c="#fe820a">1</Count>
          </HeaderGroup>
          <HeaderGroup $ml={17}>
            <ShieldAlert size={26} strokeWidth={1.5} color="#fff" />
            <Count $c="#e6001f">1</Count>
          </HeaderGroup>
          <HeaderGroup $ml={17} $gap={6}>
            <CircleUserRound size={25} strokeWidth={1.6} color="#fff" />
            <HeaderLabel>Admin</HeaderLabel>
            <ChevronDown size={16} strokeWidth={1.6} color="#fff" />
          </HeaderGroup>
          <HeaderGroup $ml={20}>
            <LogOut size={25} strokeWidth={1.5} color="#fff" />
            <HeaderLabel>log out</HeaderLabel>
          </HeaderGroup>
        </Header>
        <Breadcrumbs>
          Dashboard
          <ChevronRight size={16} strokeWidth={1.5} />
          M1-Apr24-03
          <ChevronRight size={16} strokeWidth={1.5} />
          M1-Apr24-03_SanchariSaha_Pipeline
          <ChevronRight size={16} strokeWidth={1.5} />
        </Breadcrumbs>
        <Content>
          <Sidebar>
            <SideNav>
              {sideItems.map((s) => (
                <SideItem key={s.label} $active={s.active}>
                  <SideIcon>{s.icon}</SideIcon>
                  {s.label}
                </SideItem>
              ))}
            </SideNav>
            <HistoryCard>
              <HistoryHead>
                <Sun size={25} strokeWidth={1.7} color="#f9b016" />
                <HistoryTitle>Build History</HistoryTitle>
                <TrendLink>trend</TrendLink>
                <HistoryToggle><ChevronUp size={18} strokeWidth={2} /></HistoryToggle>
              </HistoryHead>
              <FeedRow>
                <FeedLink><Rss size={17} strokeWidth={1.8} /><span>Atom feed for all</span></FeedLink>
                <FeedLink><Rss size={17} strokeWidth={1.8} /><span>Atom feed for failures</span></FeedLink>
              </FeedRow>
            </HistoryCard>
          </Sidebar>
          <Main>
            <TitleRow>
              <SuccessIcon />
              <PipelineTitle>M1-Apr24-03_SanchariSaha_Pipeline</PipelineTitle>
            </TitleRow>
            <Actions>
              <AddDescription><Pencil size={18} strokeWidth={1.4} />Add description</AddDescription>
              <DisableButton>Disable Project</DisableButton>
            </Actions>
            <SectionTitle $mt={31} $size={24}>Stage View</SectionTitle>
            <StageView>
              <StageLabels>
                <AverageNote>
                  Average stage times:<br />
                  (Average <u>full</u> run time: ~20s)
                </AverageNote>
                <BuildRow>
                  <BuildBadge>#1</BuildBadge>
                  <BuildDate>Jun 27<br />17:20</BuildDate>
                  <NoChanges>No<br />Changes</NoChanges>
                </BuildRow>
              </StageLabels>
              <StageTable>
                {stages.map((s, i) => (
                  <StageHead key={i} $odd={i % 2 === 0}>{s.name}</StageHead>
                ))}
                {stages.map((s, i) => (
                  <StageAvg key={i} $odd={i % 2 === 0}>
                    {s.avg}
                    <BarTrack>
                      {s.ticks.map((t) => (
                        <BarTick key={t} style={{ left: `${t}%` }} />
                      ))}
                      <BarFill style={{ left: `${s.fill[0]}%`, width: `${s.fill[1]}%` }} />
                    </BarTrack>
                  </StageAvg>
                ))}
                {stages.map((s, i) => (
                  <StageCell key={i}>
                    <StageCard $odd={i % 2 === 0} $big={s.big}>{s.avg}</StageCard>
                  </StageCell>
                ))}
              </StageTable>
            </StageView>
            <TestResult>
              <ClipboardGlyph w={37} h={51} sw={3} />
              <span><BlueLink>Latest Test Result</BlueLink> (no failures)</span>
            </TestResult>
            <SectionTitle $mt={4} $size={23}>Permalinks</SectionTitle>
            <Permalinks>
              <li><BlueLink>Last build (#1), 53 sec ago</BlueLink></li>
              <li><BlueLink>Last stable build (#1), 53 sec ago</BlueLink></li>
            </Permalinks>
          </Main>
        </Content>
      </PageBody>
      <Scrollbar>
        <ScrollArrow $up />
        <ScrollThumb />
        <ScrollArrow />
      </Scrollbar>
    </Page>
    <Gutter />

    <Taskbar>
      <WeatherSlot>
        <CloudIcon />
        <RedCount $l={47} $t={-14}>1</RedCount>
      </WeatherSlot>
      {taskApps.map((a, i) => (
        <TaskItem key={i} $bg={a.bg}>
          {a.icon}
          {a.count && <RedCount $l={33} $t={0}>{a.count}</RedCount>}
          {a.dot && <TaskDot $c={a.dotColor} />}
          {a.bar && <TaskDot $wide $c="#c83ab8" />}
        </TaskItem>
      ))}
      <Tray>
        <TrayIcons>
          <ChevronUp size={24} strokeWidth={1.8} color="#111" />
          <Wifi size={28} strokeWidth={1.6} color="#111" />
          <Volume2 size={26} strokeWidth={1.5} color="#111" />
          <BatteryLow size={28} strokeWidth={1.6} color="#111" />
        </TrayIcons>
        <Clock>5:21 PM<br />6/27/2024</Clock>
        <Bell size={24} strokeWidth={1.5} color="#111" />
      </Tray>
    </Taskbar>
  </Screen>
);

export default App;
